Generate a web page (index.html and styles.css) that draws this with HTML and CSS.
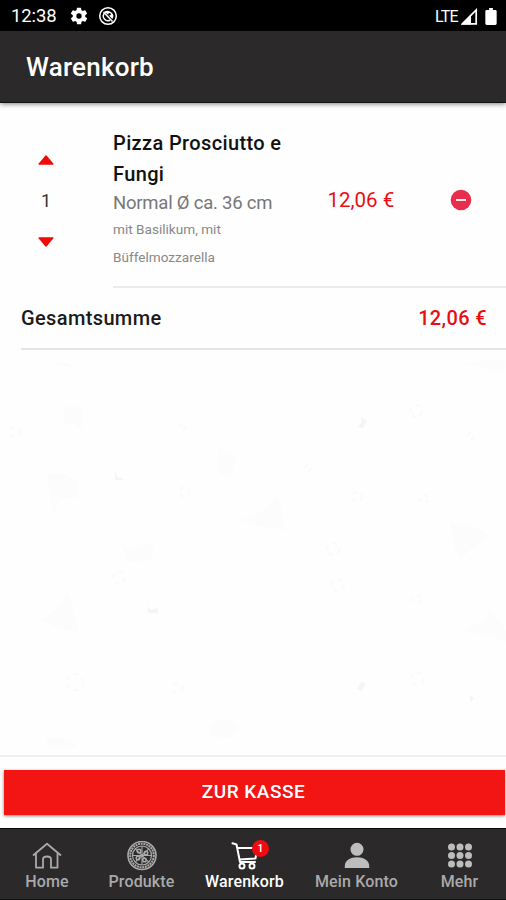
FILE: index.html
```html
<!DOCTYPE html>
<html lang="de">
<head>
<meta charset="utf-8">
<title>Warenkorb</title>
<link rel="stylesheet" href="styles.css">
</head>
<body>
<div class="status">
  <span class="clock">12:38</span>
  <svg class="gear" width="20" height="20" viewBox="0 0 24 24"><path fill="#fff" fill-rule="evenodd" d="M19.4 13a7 7 0 0 0 0-2l2.1-1.6c.2-.2.3-.4.1-.7l-2-3.4c-.1-.2-.4-.3-.6-.2l-2.500 1a7.500 7.500 0 0 0-1.700-1l-.4-2.600a.5.5 0 0 0-.5-.5h-4a.5.5 0 0 0-.5.4l-.3 2.700a7.500 7.500 0 0 0-1.700 1l-2.500-1c-.2-.1-.5 0-.6.2l-2 3.400c-.1.300 0 .500.100.700L4.600 11a7 7 0 0 0 0 2l-2.100 1.600c-.2.200-.3.500-.1.700l2 3.400c.1.200.4.300.6.200l2.500-1c.5.400 1.100.700 1.700 1l.4 2.600c0 .3.200.5.500.5h4c.2 0 .4-.2.500-.4l.3-2.700a7.500 7.500 0 0 0 1.700-1l2.500 1c.2.100.5 0 .6-.2l2-3.400c.1-.2.100-.5-.1-.7zM12 15.200a3.200 3.200 0 1 1 0-6.400 3.200 3.200 0 0 1 0 6.400z"/></svg>
  <svg class="blocked" width="20" height="20" viewBox="0 0 20 20" fill="none" stroke="#fff"><circle cx="10" cy="10" r="8.300" stroke-width="1.500"/><path d="M6.300 7.200A4.700 4.700 0 0 0 12 14.300" stroke-width="1.500"/><path d="M6.500 5.500Q10 3.500 13.500 6.500T14.300 13L10.500 9Q9 7 6.500 7z" fill="#fff" stroke="none"/><path d="M5.500 6l9 9.500" stroke-width="1.500"/><circle cx="11.500" cy="8.300" r="1.200" fill="#000" stroke="none"/></svg>
  <span class="lte">LTE</span>
  <svg class="signal" width="17" height="17" viewBox="0 0 17 17"><path d="M1.500 15.800H15.200V2z" fill="none" stroke="#fff" stroke-width="1.700"/><path d="M.5 16.500h9.500V6.500z" fill="#fff"/></svg>
  <svg class="battery" width="12" height="17" viewBox="0 0 12 18"><path d="M4 0h4v2h2.500Q12 2 12 3.500v13Q12 18 10.500 18h-9Q0 18 0 16.500v-13Q0 2 1.500 2H4z" fill="#fff"/></svg>
</div>
<header class="toolbar"><h1 class="title">Warenkorb</h1></header>
<main class="content">
  <section class="item">
    <div class="stepper">
      <svg width="16" height="10" viewBox="0 0 16 10"><path d="M1.200 9.700Q-.2 9.700.7 8.400L7.200.7Q8-.2 8.800.7l6.500 7.700Q16.200 9.700 14.800 9.700z" fill="#f00a0a"/></svg>
      <span class="count">1</span>
      <svg width="16" height="10" viewBox="0 0 16 10"><path d="M1.200.3Q-.2.300.7 1.600l6.500 7.700Q8 10.200 8.800 9.300l6.500-7.700Q16.200.3 14.800.3z" fill="#f00a0a"/></svg>
    </div>
    <div class="details">
      <div class="info">
        <h2 class="name">Pizza Prosciutto e<br>Fungi</h2>
        <p class="variant">Normal Ø ca. 36 cm</p>
        <p class="extras">mit Basilikum, mit<br>Büffelmozzarella</p>
      </div>
      <span class="price">12,06 €</span>
      <svg class="remove" width="22" height="22" viewBox="0 0 22 22"><circle cx="11" cy="11" r="10.300" fill="#e72e4c"/><path d="M6 11h10" stroke="#fff" stroke-width="1.800"/></svg>
    </div>
  </section>
  <section class="total"><span class="label">Gesamtsumme</span><span class="sum">12,06 €</span></section>
  <svg class="pattern" width="506" height="404" viewBox="0 0 506 404" fill="#fcfcfc">
    <path d="M50 12l16 1 12 5-14-2zM465 14l20-5 20 1v15l-16-6zM64 57h18v22l-8-5-10 1zM47 123l20 2 12 8-1 14-17 2-8 14zM240 170l22-8 16-18 8 36-28-4zM120 192l10 7 24-6-3 17-22 2zM450 171l25 6 16 10-20 12-10 10-7-12zM40 270l18-12 10-17 10 40-20-3zM464 280l18-8 8-13 16 22v10l-22-6zM218 98l20 8-8 22-12-6zM209 376l16-8 14 6-8 14-20-2zM46 388l24 1 8 8-30 1z"/>
    <g fill="none" stroke="#fafafa" stroke-width="2" stroke-dasharray="5 4"><circle cx="183" cy="77" r="3"/><circle cx="185" cy="142" r="5"/><circle cx="357" cy="147" r="5"/><circle cx="424" cy="149" r="4"/><circle cx="417" cy="249" r="4"/><circle cx="333" cy="199" r="6"/><circle cx="338" cy="235" r="6"/><circle cx="75" cy="332" r="8"/><circle cx="308" cy="118" r="3"/><circle cx="471" cy="86" r="3"/><circle cx="15" cy="82" r="5"/><circle cx="119" cy="228" r="6"/><circle cx="178" cy="338" r="5"/><circle cx="417" cy="329" r="6"/><circle cx="416" cy="61" r="6"/></g>
    <path fill="#f5f5f5" d="M361 67l6 4-4 7-6-1 4-4zM115 121l3 7h5v2h-8zM148 256l3 4 7-2v5h-10zM357 339l4-7 5 2-4 7zM469 345l5 3-3 5z"/>
  </svg>
</main>
<footer class="checkout"><button class="pay"><span class="pay-text">ZUR KASSE</span></button></footer>
<nav class="tabs">
  <a class="tab home">
    <svg width="32" height="30" viewBox="0 0 32 30" fill="none" stroke="#aaa" stroke-width="1.800" stroke-linejoin="round"><path d="M2 14.500L16 2.800l14 11.700M5 12.500v14.200h7v-8.500q0-2.700 4-2.700t4 2.700v8.500h6.500v-14.200"/></svg>
    <span class="tab-text">Home</span>
  </a>
  <a class="tab products">
    <svg width="32" height="30" viewBox="0 0 32 30" fill="none" stroke="#aaa"><circle cx="16" cy="14.500" r="14" stroke-width="1.600"/><circle cx="16" cy="14.500" r="11.800" stroke-width="2" stroke-dasharray="2 .7"/><circle cx="16" cy="14.500" r="9.500" stroke-width="1.200"/><path d="M16 5v19M6.500 14.500h19M9.300 7.800l13.400 13.400M22.700 7.800L9.300 21.200" stroke-width="1.100"/><g stroke-width="1.500"><circle cx="13" cy="10" r="1.800"/><circle cx="20" cy="12" r="1.800"/><circle cx="12" cy="17" r="1.800"/><circle cx="18.500" cy="19" r="1.800"/></g></svg>
    <span class="tab-text">Produkte</span>
  </a>
  <a class="tab cart">
    <svg width="32" height="30" viewBox="0 0 32 30" fill="none" stroke="#fff" stroke-width="2" stroke-linecap="round" stroke-linejoin="round"><path d="M3.500 2.300l4 1.200L11 21H26M9 7H28L26.500 17.500 10.500 18.500"/><circle cx="13" cy="25" r="2.500"/><circle cx="23" cy="25" r="2.500"/></svg>
    <span class="badge">1</span>
    <span class="tab-text">Warenkorb</span>
  </a>
  <a class="tab account">
    <svg width="32" height="30" viewBox="0 0 32 30" fill="#bdbdbd"><circle cx="16" cy="8.300" r="6.500"/><path d="M3.800 27v-2C3.800 19.300 9.500 16.300 16 16.300s12.200 3 12.200 8.700v2z"/></svg>
    <span class="tab-text">Mein Konto</span>
  </a>
  <a class="tab more">
    <svg width="32" height="30" viewBox="0 0 32 30" fill="#bdbdbd"><circle cx="7.500" cy="6" r="3.500"/><circle cx="16" cy="6" r="3.500"/><circle cx="24.500" cy="6" r="3.500"/><circle cx="7.500" cy="14.500" r="3.500"/><circle cx="16" cy="14.500" r="3.500"/><circle cx="24.500" cy="14.500" r="3.500"/><circle cx="7.500" cy="23" r="3.500"/><circle cx="16" cy="23" r="3.500"/><circle cx="24.500" cy="23" r="3.500"/></svg>
    <span class="tab-text">Mehr</span>
  </a>
</nav>
</body>
</html>
```
FILE: styles.css
```css
* { box-sizing: border-box; margin: 0; padding: 0; }
body {
  width: 506px;
  height: 900px;
  display: flex;
  flex-direction: column;
  overflow: hidden;
  background: #fefefe;
  font-family: Roboto, sans-serif;
}
svg { display: block; flex: none; }
span, h1, h2, p { white-space: nowrap; }
.status {
  height: 31px;
  flex: none;
  display: flex;
  align-items: center;
  padding: 1px 9px 0 11px;
  background: #000;
  color: #fff;
}
.clock { width: 58px; font-size: 18.500px; letter-spacing: -0.1px; }
.blocked { margin-left: 9px; }
.lte { margin-left: auto; font-size: 16px; letter-spacing: -0.7px; }
.signal { margin-left: 3px; }
.battery { margin-left: 7px; }
.toolbar {
  height: 72px;
  flex: none;
  display: flex;
  align-items: center;
  padding-left: 26px;
  background: #2b292a;
  border-bottom: 1px solid #111;
  box-shadow: 0 1px 5px rgba(0, 0, 0, 0.5);
}
.title { font-size: 26px; font-weight: 500; letter-spacing: 0.22px; color: #fff; }
.content { flex: 1; min-height: 0; overflow: hidden; }
.item { height: 185px; display: flex; }
.stepper {
  width: 113px;
  padding: 52px 0 0 38px;
  display: flex;
  flex-direction: column;
  align-items: flex-start;
}
.count {
  width: 16px;
  height: 72px;
  line-height: 71px;
  text-align: center;
  font-size: 18px;
  color: #333;
}
.details {
  flex: 1;
  display: flex;
  align-items: flex-start;
  border-bottom: 2px solid #ebebeb;
}
.info { width: 214.500px; padding-top: 25px; }
.name { font-size: 20px; line-height: 31px; font-weight: 500; letter-spacing: 0.37px; color: #111; }
.variant { font-size: 18.500px; line-height: 26px; letter-spacing: -0.22px; color: #777; }
.extras { font-size: 13.600px; line-height: 27.500px; color: #888; }
.price { width: 122.500px; padding-top: 85px; font-size: 20.500px; line-height: 24px; color: #e80e12; }
.remove { margin-top: 86px; }
.total {
  height: 62px;
  margin-left: 21px;
  padding-right: 19px;
  display: flex;
  justify-content: space-between;
  align-items: center;
  border-bottom: 2px solid #e4e4e4;
  font-size: 20px;
  font-weight: 500;
  letter-spacing: 0.37px;
  color: #1a1a1a;
}
.sum { color: #e80e12; }
.checkout {
  height: 73px;
  flex: none;
  padding: 13px 1px 0 4px;
  border-top: 2px solid #f0f0f0;
}
.pay {
  display: block;
  width: 100%;
  height: 45px;
  padding: 0 2px 3px 0;
  border: 0;
  background: #f31414;
  color: #fff;
  font: 500 19px Roboto, sans-serif;
  letter-spacing: 0.5px;
  box-shadow: 0 1px 3px rgba(0, 0, 0, 0.5);
}
.tabs {
  height: 72px;
  flex: none;
  display: grid;
  grid-template-columns: 94px 95px 111px 113px 93px;
  background: #2b292a;
  border-top: 1px solid #080808;
  border-bottom: 1px solid #111;
}
.tab {
  position: relative;
  display: flex;
  flex-direction: column;
  align-items: center;
  padding-top: 12px;
  color: #aaa;
}
.tab-text { font-size: 16px; font-weight: 500; line-height: 21px; letter-spacing: 0.15px; }
.cart { color: #fff; }
.badge {
  position: absolute;
  top: 11px;
  left: 63px;
  width: 17px;
  height: 17px;
  border-radius: 50%;
  background: #ee0c12;
  color: #fff;
  text-align: center;
  font-size: 11px;
  font-weight: 500;
  line-height: 17px;
}
```
